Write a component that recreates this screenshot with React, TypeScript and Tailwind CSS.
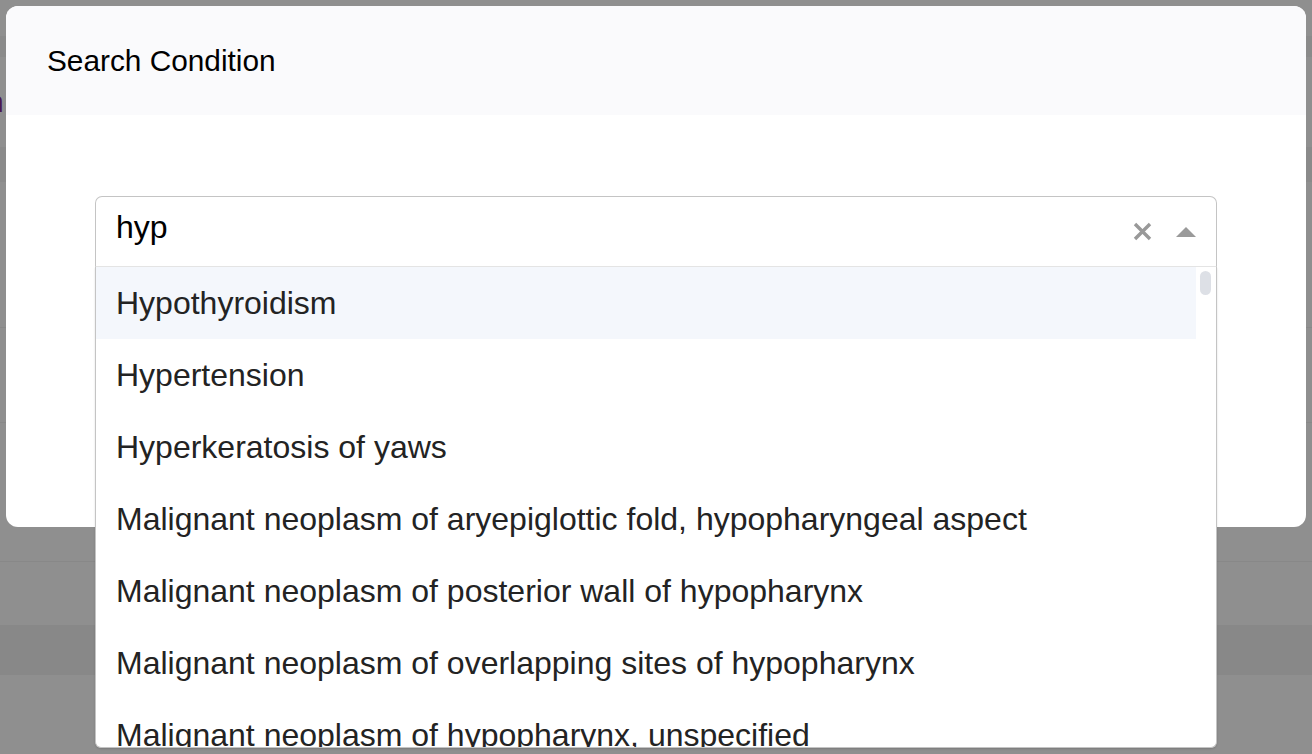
import React from 'react';

const options = [
  'Hypothyroidism',
  'Hypertension',
  'Hyperkeratosis of yaws',
  'Malignant neoplasm of aryepiglottic fold, hypopharyngeal aspect',
  'Malignant neoplasm of posterior wall of hypopharynx',
  'Malignant neoplasm of overlapping sites of hypopharynx',
  'Malignant neoplasm of hypopharynx, unspecified',
  'Hypopharyngeal diverticulum',
  'Hyperlipidemia, unspecified',
];

function ClearIcon() {
  return (
    <svg width="19" height="19" viewBox="0 0 19 19" aria-hidden="true">
      <path d="M2 2 L17 17 M17 2 L2 17" stroke="#999999" strokeWidth="3.4" strokeLinecap="butt" />
    </svg>
  );
}

function CaretUp() {
  return (
    <svg width="20" height="10" viewBox="0 0 20 10" aria-hidden="true">
      <polygon points="0,10 10,0 20,10" fill="#9a9a9a" />
    </svg>
  );
}

// dimmed page behind the modal
function Backdrop() {
  return (
    <div className="flex flex-col w-full h-full">
      <div className="h-[36px] bg-[#8f8f8f]" />
      <div className="h-[21px] bg-[#8a8a8a]" />
      <div className="h-[90px] bg-[#8f8f8f] flex items-center">
        <span className="ml-[-13px] text-[30px] leading-none text-[#4a1650]">n</span>
      </div>
      <div className="h-[35px] bg-[#8a8a8a]" />
      <div className="h-[146px] bg-[#8f8f8f] border-b border-[#888888]" />
      <div className="h-[95px] bg-[#8f8f8f] border-b border-[#888888]" />
      <div className="h-[139px] bg-[#8f8f8f] border-b border-[#888888]" />
      <div className="h-[63px] bg-[#8f8f8f]" />
      <div className="h-[50px] bg-[#888888]" />
      <div className="flex-1 bg-[#8f8f8f]" />
    </div>
  );
}

export default function App() {
  return (
    <div className="relative w-[1312px] h-[754px] overflow-hidden bg-[#8f8f8f] font-['Liberation_Sans',Arial,sans-serif]">
      <Backdrop />

      <div className="absolute left-[6px] top-[6px] w-[1300px] h-[521px] rounded-[12px] bg-white">
        {/* Header */}
        <div className="h-[109px] rounded-t-[12px] bg-[#fafafc] flex items-center px-[41px]">
          <h2 className="text-[29.8px] leading-[36px] text-black">Search Condition</h2>
        </div>

        {/* Body */}
        <div className="px-[89px] pt-[81px]">
          <div className="relative">
            <div className="h-[71px] flex items-center border border-[#c4c4c4] border-b-[#e6e6e6] rounded-t-[7px] pl-[20px] pr-[20px]">
              <span className="flex-1 text-[32px] leading-none text-black pb-[9px]">hyp</span>
              <div className="flex items-center gap-[24px]">
                <ClearIcon />
                <CaretUp />
              </div>
            </div>

            {/* Dropdown menu */}
            <div className="absolute left-0 right-0 top-full h-[481px] flex border-x border-b border-[#c4c4c4] rounded-b-[6px] bg-white overflow-hidden shadow-[0_1px_2px_rgba(0,0,0,0.15)]">
              <ul className="flex-1 overflow-hidden">
                {options.map((opt, i) => (
                  <li
                    key={opt}
                    className={`h-[72px] flex items-center px-[20px] text-[32px] leading-none text-[#232323] ${
                      i === 0 ? 'bg-[#f4f7fc]' : ''
                    }`}
                  >
                    {opt}
                  </li>
                ))}
              </ul>
              <div className="w-[20px] pt-[4px] pl-[4px]">
                <div className="w-[11px] h-[24px] rounded-full bg-[#dde0e6]" />
              </div>
            </div>
          </div>
        </div>
      </div>
    </div>
  );
}
